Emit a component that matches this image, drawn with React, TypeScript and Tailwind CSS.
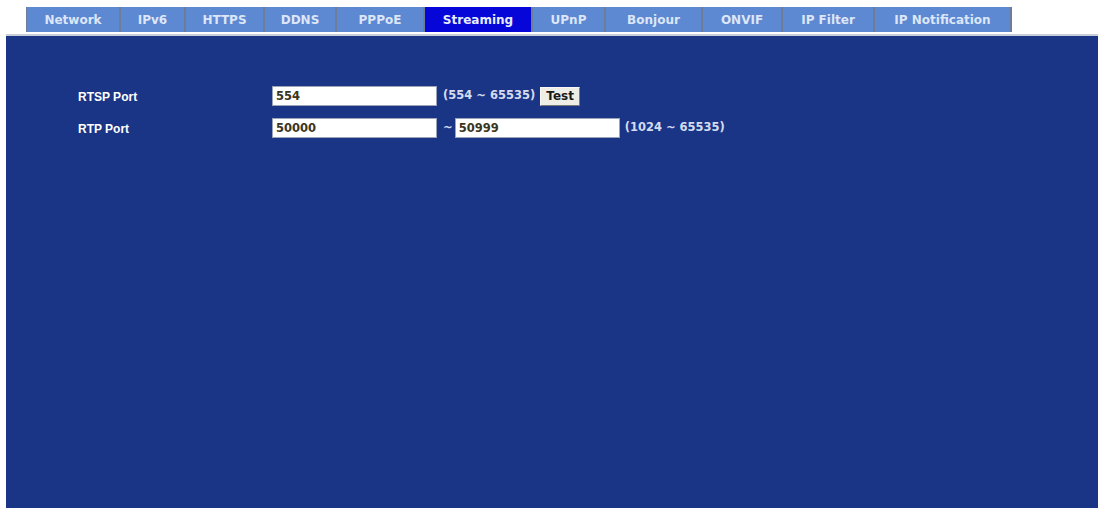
import React from "react";

const tabs = [
  { label: "Network", w: "w-[95px]" },
  { label: "IPv6", w: "w-[65px]" },
  { label: "HTTPS", w: "w-[79px]" },
  { label: "DDNS", w: "w-[72px]" },
  { label: "PPPoE", w: "w-[88px]" },
  { label: "Streaming", w: "w-[108px]", active: true },
  { label: "UPnP", w: "w-[73px]" },
  { label: "Bonjour", w: "w-[97px]" },
  { label: "ONVIF", w: "w-[80px]" },
  { label: "IP Filter", w: "w-[92px]" },
  { label: "IP Notification", w: "w-[137px]" },
];

const dejavu = { fontFamily: '"DejaVu Sans", Verdana, sans-serif' };

function TabBar() {
  return (
    <div className="flex h-[25px] pl-[26px] pt-[7px] box-content">
      {tabs.map((t, i) => (
        <div
          key={t.label}
          className={`${t.w} flex items-center justify-center text-[12px] font-bold border-r-2 border-[#6d7d96] ${
            i === 0 ? "border-l" : ""
          } ${t.active ? "bg-[#0606d8] text-[#e6ecff]" : "bg-[#5d88d2] text-[#dce6f7]"}`}
          style={dejavu}
        >
          {t.label}
        </div>
      ))}
    </div>
  );
}

function Field({ value }: { value: string }) {
  return (
    <input
      readOnly
      value={value}
      style={dejavu}
      className="w-[165px] h-[20px] bg-white border border-[#9aa4b8] px-[3px] text-[11.5px] font-bold text-[#3a3520] outline-none"
    />
  );
}

export default function App() {
  return (
    <div
      className="w-[1100px] h-[509px] bg-white overflow-hidden"
      style={{ fontFamily: '"Liberation Sans", Arial, sans-serif' }}
    >
      <TabBar />
      <div className="ml-[6px] mr-[2px] mt-[2px] border-t-2 border-[#c9ced8]">
        <div className="h-[472px] bg-[#1b3586] pl-[72px] pt-[50px] text-[12px] font-bold text-white">
          <div className="flex">
            <div className="w-[194px] pt-[2px]">RTSP Port</div>
            <div className="flex items-center">
              <Field value="554" />
              <span className="ml-[6px] text-[11.5px] text-[#d3dcf0]" style={dejavu}>
                (554 ~ 65535)
              </span>
              <button
                className="ml-[5px] h-[19px] w-[40px] bg-[#eeeee6] border border-t-[#f8f8f8] border-l-[#f8f8f8] border-r-[#7a7a7a] border-b-[#7a7a7a] text-[12px] font-bold text-[#1a1a1a] leading-none"
                style={dejavu}
              >
                Test
              </button>
            </div>
          </div>
          <div className="flex mt-[12px]">
            <div className="w-[194px] pt-[2px]">RTP Port</div>
            <div className="flex items-center">
              <Field value="50000" />
              <span className="ml-[6px] mr-[2px] text-[11.5px] text-[#d3dcf0]" style={dejavu}>
                ~
              </span>
              <Field value="50999" />
              <span className="ml-[5px] text-[11.5px] text-[#d3dcf0]" style={dejavu}>
                (1024 ~ 65535)
              </span>
            </div>
          </div>
        </div>
      </div>
    </div>
  );
}
